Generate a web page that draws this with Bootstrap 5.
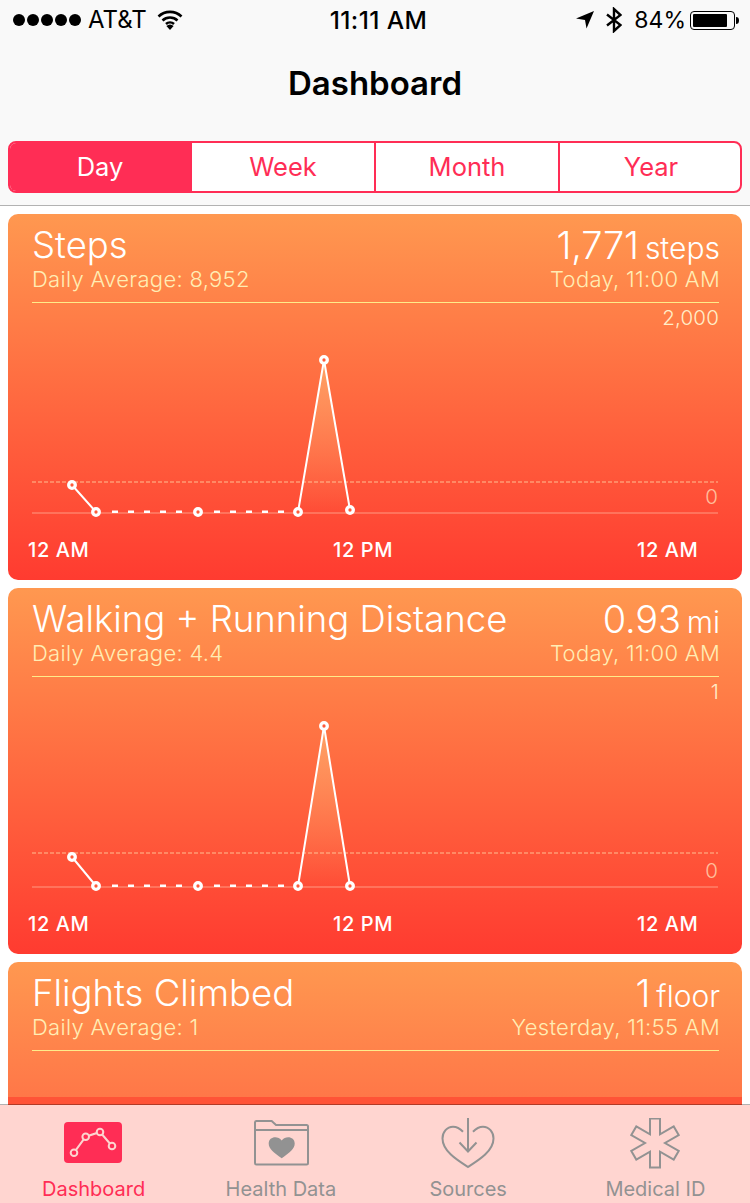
<!DOCTYPE html>
<html lang="en">
<head>
    <meta charset="UTF-8">
    <title>Dashboard</title>
    <link href="https://cdn.jsdelivr.net/npm/bootstrap@5.3.0/dist/css/bootstrap.min.css" rel="stylesheet">
    <style>
        html, body { height: 100%; overflow: hidden; }
        body { font-family: Inter, "Liberation Sans", sans-serif; background: #fff; color: #000; }
        .phone { height: 1203px; overflow: hidden; position: relative; }

        .top-area { background: #f9f9f9; height: 206px; border-bottom: 1px solid #b2b2b2; padding: 0 8px; }
        .status-row { height: 40px; font-size: 24px; margin: 0 -8px; padding: 0 11px 0 13px; }
        .signal-dots { gap: 2px; }
        .signal-dots i { width: 12px; height: 12px; border-radius: 50%; background: #000; display: block; }
        .carrier { margin-right: 10px; margin-left: -1px; }
        .clock { position: absolute; left: 7px; right: 0; top: 0; line-height: 40px; text-align: center; font-size: 24.500px; font-weight: 500; letter-spacing: .4px; }
        .loc-icon { margin-right: 12px; }
        .battery-text { font-size: 23px; margin: 0 4px 0 12px; }
        .page-title { font-size: 33px; font-weight: 600; line-height: 40px; text-align: center; margin: 23px 0 38px; }

        .range-tabs { height: 52px; border: 2px solid #ff2d55; border-radius: 8px; overflow: hidden; background: #fff; }
        .range-tab { flex: none; width: 184px; display: flex; align-items: center; justify-content: center; font-size: 25.500px; color: #ff2d55; border-right: 2px solid #ff2d55; }
        .range-tab:nth-child(1) { width: 182px; }
        .range-tab:last-child { width: 180px; border-right: 0; padding-left: 2px; }
        .range-tab.on { background: #ff2d55; color: #fff; }

        .chart-list { padding: 8px 8px 0; gap: 8px; }
        .metric-card { height: 366px; border-radius: 10px; color: #fff; padding: 11px 23px 0 24px; background: linear-gradient(#ff9850, #ff3b30); }
        .metric-card.under-bar { background: linear-gradient(#ff9850, #ff7748 135px, #ff5337 135px); height: 200px; }
        .head-row { border-bottom: 1px solid #ffec8a; height: 78px; }
        .metric-name { font-size: 36.500px; line-height: 40px; font-weight: 300; }
        .value-col { margin-right: -1px; }
        .metric-value { font-size: 38px; line-height: 40px; height: 40px; font-weight: 300; letter-spacing: -.2px; }
        .metric-value span { font-size: 30px; line-height: 30px; margin-left: 6px; letter-spacing: 0; }
        .sub-line { font-size: 22px; line-height: 26px; font-weight: 300; letter-spacing: .3px; color: #ffedb4; margin-top: 1px; }
        .plot { position: relative; height: 275px; margin-left: -4px; }
        .plot svg { display: block; position: absolute; left: 0; top: 0; }
        .plot-text { font-family: Inter, "Liberation Sans", sans-serif; fill: #fff; }
        .hour-label { font-size: 20px; letter-spacing: .6px; font-weight: 500; }
        .scale-label { font-size: 20.500px; font-weight: 300; letter-spacing: .2px; fill: #ffedc8; }

        .tab-bar { position: absolute; left: 0; right: 0; top: 1104px; height: 99px; padding-right: 1px; background: #ffd5d0; background-clip: padding-box; border-top: 1px solid rgba(0, 0, 0, .3); }
        .tab-item { flex: 1 1 0; text-align: center; font-size: 20px; line-height: 24px; color: #929292; padding-top: 13px; }
        .tab-item svg { display: block; margin: 0 auto 3px; height: 56px; }
        .tab-item.on { color: #ff2d55; }
    </style>
</head>
<body>
<div class="phone">
    <div class="top-area">
        <div class="status-row d-flex align-items-center position-relative">
            <div class="signal-dots d-flex me-2"><i></i><i></i><i></i><i></i><i></i></div>
            <span class="carrier">AT&amp;T</span>
            <svg width="26" height="20" viewBox="0 0 26 20"><path d="M1.500 6.500a16.500 16.500 0 0 1 23 0M5.500 10.500a11 11 0 0 1 15 0M9 14a6 6 0 0 1 8 0" fill="none" stroke="#000" stroke-width="2.600"/><path d="M13 20l-3.600-4a5 5 0 0 1 7.200 0z"/></svg>
            <div class="clock">11:11 AM</div>
            <div class="ms-auto d-flex align-items-center">
                <svg width="18" height="18" viewBox="0 0 18 18" class="loc-icon"><path d="M18 0L10.500 17.500 9 9 0 7.500z"/></svg>
                <svg width="16" height="26" viewBox="0 0 16 26"><path d="M1 7.500L14.500 18 8 24V2L14.500 8 1 18.500" fill="none" stroke="#000" stroke-width="2.400"/></svg>
                <span class="battery-text">84%</span>
                <svg width="49" height="19" viewBox="0 0 49 19"><rect x=".5" y=".5" width="44" height="18" rx="3.500" fill="none" stroke="#000"/><rect x="3" y="3" width="34" height="13" rx="1"/><path d="M46 6c2 0 3 1 3 3.500s-1 3.500-3 3.500z"/></svg>
            </div>
        </div>
        <div class="page-title">Dashboard</div>
        <div class="range-tabs d-flex">
            <div class="range-tab on">Day</div>
            <div class="range-tab">Week</div>
            <div class="range-tab">Month</div>
            <div class="range-tab">Year</div>
        </div>
    </div>

    <div id="charts" class="chart-list d-flex flex-column"></div>

    <div class="tab-bar d-flex">
        <div class="tab-item on">
            <svg width="60" height="56" viewBox="0 0 60 56"><rect y="4" width="58" height="41" rx="4" fill="#ff2d55"/><path d="M10 34.700L21.700 18.700 36 14 48 28" fill="none" stroke="#fdd4cf" stroke-width="2"/><g fill="#ff2d55" stroke="#fdd4cf" stroke-width="2"><circle cx="10" cy="34.700" r="3.300"/><circle cx="21.700" cy="18.700" r="3.300"/><circle cx="36" cy="14" r="3.300"/><circle cx="48" cy="28" r="3.300"/></g></svg>
            Dashboard
        </div>
        <div class="tab-item">
            <svg width="56" height="56" viewBox="0 0 56 56"><path d="M2 45V4.500A1.500 1.500 0 0 1 3.500 3H18.700L23 7H53.500A1.500 1.500 0 0 1 55 8.500V45a1.500 1.500 0 0 1-1.500 1.500H3.500A1.500 1.500 0 0 1 2 45zM2 12H55" fill="none" stroke="#929292" stroke-width="2"/><path d="M28.700 40.300C20.700 34.500 15.700 31 15.700 25.500c0-7 9-8.500 13-3 4-5.500 13-4 13 3C41.700 31 36.700 34.500 28.700 40.300z" fill="#929292"/></svg>
            Health Data
        </div>
        <div class="tab-item">
            <svg width="54" height="56" viewBox="0 0 54 56"><path d="M22 13.700C19 10.500 15.500 8.700 12 8.700 6 8.700 1.500 14 1.500 20.500 1.500 33 16 42 27 49 38 42 52.500 33 52.500 20.500 52.500 14 48 8.700 42 8.700 38.500 8.700 35 10.500 32 13.700" fill="none" stroke="#929292" stroke-width="2"/><path d="M27 0V33M18.500 24.500L27 33.500 35.500 24.500" fill="none" stroke="#929292" stroke-width="2"/></svg>
            Sources
        </div>
        <div class="tab-item">
            <svg width="50" height="56" viewBox="0 0 50 56"><path d="M20 .5H30V16.340L43.700 8.400 48.700 17.100 35 25 48.700 32.900 43.700 41.600 30 33.660V49.500H20V33.660L6.300 41.600 1.300 32.900 15 25 1.300 17.100 6.300 8.400 20 16.340z" fill="none" stroke="#929292" stroke-width="2"/></svg>
            Medical ID
        </div>
    </div>
</div>

<script src="https://cdn.jsdelivr.net/npm/bootstrap@5.3.0/dist/js/bootstrap.bundle.min.js"></script>
<script>
    const metrics = [
        { name: 'Steps', avg: 'Daily Average: 8,952', value: '1,771', unit: 'steps', when: 'Today, 11:00 AM', max: '2,000',
          first: 182, peak: 57, last: 207, dashed: 179 },
        { name: 'Walking + Running Distance', avg: 'Daily Average: 4.4', value: '0.93', unit: 'mi', when: 'Today, 11:00 AM', max: '1',
          first: 180, peak: 49, last: 209, dashed: 176 },
        { name: 'Flights Climbed', avg: 'Daily Average: 1', value: '1', unit: 'floor', when: 'Yesterday, 11:55 AM', short: true }
    ];

    function plotSvg(m) {
        const X = [44, 68, 170, 270, 296, 322];
        const zero = 209;
        const dots = [[X[0], m.first], [X[1], zero], [X[2], zero], [X[3], zero], [X[4], m.peak], [X[5], m.last]];
        const circles = dots.map(d => `<circle cx="${d[0]}" cy="${d[1]}" r="3.300" fill="#ff5a3a" stroke="#fff" stroke-width="3.300"/>`).join('');
        return `<svg width="700" height="275" viewBox="0 0 700 275">
            <defs><linearGradient id="fill${m.peak}" x1="0" y1="0" x2="0" y2="1"><stop offset="0" stop-color="#ffb070" stop-opacity=".75"/><stop offset="1" stop-color="#ffb070" stop-opacity="0"/></linearGradient></defs>
            <path d="M${X[3]} ${zero}L${X[4]} ${m.peak}L${X[5]} ${m.last}Z" fill="url(#fill${m.peak})"/>
            <line x1="4" x2="690" y1="${m.dashed}" y2="${m.dashed}" stroke="#ffd9a8" stroke-opacity=".8" stroke-dasharray="4 2"/>
            <line x1="4" x2="690" y1="210" y2="210" stroke="#ffd0b8" stroke-opacity=".6"/>
            <path d="M${X[0]} ${m.first}L${X[1]} ${zero}M${X[3]} ${zero}L${X[4]} ${m.peak}L${X[5]} ${m.last}" fill="none" stroke="#fff" stroke-width="2"/>
            <path d="M84 ${zero - .3}H154M186 ${zero - .3}H256" stroke="#fff" stroke-width="2.500" stroke-dasharray="6 10"/>
            ${circles}
            <text class="plot-text scale-label" x="691" y="22" text-anchor="end">${m.max}</text>
            <text class="plot-text scale-label" x="690" y="201" text-anchor="end" opacity=".7">0</text>
            <text class="plot-text hour-label" x="0" y="254">12 AM</text>
            <text class="plot-text hour-label" x="305" y="254">12 PM</text>
            <text class="plot-text hour-label" x="609" y="254">12 AM</text>
        </svg>`;
    }

    const list = document.getElementById('charts');
    metrics.forEach(m => {
        const card = document.createElement('div');
        card.className = 'metric-card flex-shrink-0' + (m.short ? ' under-bar' : '');
        card.innerHTML = `
            <div class="head-row d-flex justify-content-between">
                <div><div class="metric-name">${m.name}</div><div class="sub-line">${m.avg}</div></div>
                <div class="text-end value-col"><div class="metric-value">${m.value}<span>${m.unit}</span></div><div class="sub-line">${m.when}</div></div>
            </div>
            ${m.short ? '' : `<div class="plot">${plotSvg(m)}</div>`}`;
        list.appendChild(card);
    });
</script>
</body>
</html>
